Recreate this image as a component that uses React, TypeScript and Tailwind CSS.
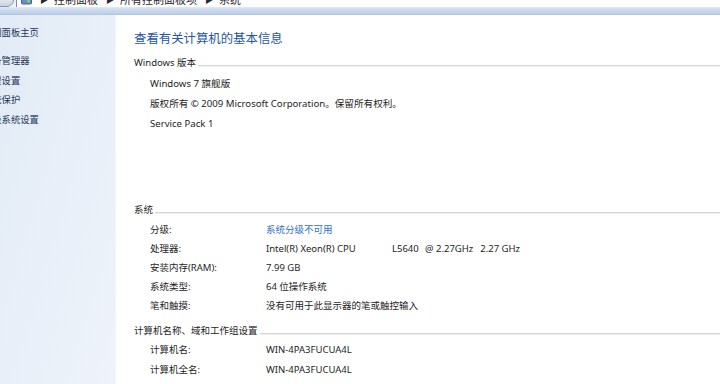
const FONT = { fontFamily: '"Noto Sans", "Noto Sans CJK SC", sans-serif' }

const sidebarLinks = [
  { label: '控制面板主页', gap: 'mt-[11px]' },
  { label: '设备管理器', gap: 'mt-[14px]' },
  { label: '远程设置', gap: 'mt-[6px]' },
  { label: '系统保护', gap: 'mt-[5px]' },
  { label: '高级系统设置', gap: 'mt-[6px]' },
]

const systemRows = [
  { label: '安装内存(RAM):', value: '7.99 GB' },
  { label: '系统类型:', value: '64 位操作系统' },
  { label: '笔和触摸:', value: '没有可用于此显示器的笔或触控输入' },
]

const nameRows = [
  { label: '计算机名:', value: 'WIN-4PA3FUCUA4L' },
  { label: '计算机全名:', value: 'WIN-4PA3FUCUA4L' },
]

function SectionHeading({ title, className = '' }: { title: string; className?: string }) {
  return (
    <div className={`flex h-[14px] items-center ${className}`}>
      <span className="whitespace-nowrap text-[9.5px] text-[#1e1e1e]">{title}</span>
      <div className="ml-[2px] mt-[5px] h-[2px] flex-1 border-t border-[#d4d4d4] bg-[#f1f1f1]" />
    </div>
  )
}

function Row({ label, tall = false, children }: { label: string; tall?: boolean; children: React.ReactNode }) {
  return (
    <div
      className={`flex items-center pl-[16px] text-[9.5px] text-[#1e1e1e] ${tall ? 'h-[20px]' : 'h-[19px]'}`}
    >
      <span className="w-[116px] shrink-0 whitespace-nowrap">{label}</span>
      <span className="whitespace-nowrap">{children}</span>
    </div>
  )
}

function AddressBar() {
  return (
    <div className="h-[7px] overflow-hidden bg-gradient-to-b from-[#e4ecf7] to-[#f4f8fc]">
      <div className="-mt-[7px] flex h-[14px] items-center text-[11px] text-[#2a2a2a]">
        <div className="-ml-[10px] h-[14px] w-[24px] shrink-0 rounded-full border border-[#8b98ab] bg-gradient-to-b from-[#f6f8fb] to-[#c9d3e1]" />
        <div className="ml-[2px] flex h-[14px] flex-1 items-center border-l border-[#7d8aa0] bg-white pl-[4px]">
          <svg width="11" height="11" viewBox="0 0 11 11" className="shrink-0">
            <rect x="0.5" y="1" width="10" height="8" rx="1" fill="#6d8cc7" stroke="#42619a" />
            <rect x="2" y="2.5" width="3" height="2" fill="#d7e3f5" />
            <rect x="6" y="5" width="3" height="2.5" fill="#9fc06a" />
          </svg>
          <span className="ml-[8px] text-[8px]">▶</span>
          <span className="ml-[6px]">控制面板</span>
          <span className="ml-[8px] text-[8px]">▶</span>
          <span className="ml-[6px]">所有控制面板项</span>
          <span className="ml-[8px] text-[8px]">▶</span>
          <span className="ml-[6px]">系统</span>
        </div>
      </div>
    </div>
  )
}

export default function App() {
  return (
    <div className="flex h-[384px] w-[720px] flex-col overflow-hidden bg-white" style={FONT}>
      <AddressBar />
      <div className="h-[8px] border-b border-[#b3c6e1] bg-gradient-to-b from-[#dfe8f5] via-[#c9d8ed] to-[#bccfe8]" />

      <div className="flex flex-1">
        <aside className="w-[116px] shrink-0 overflow-hidden border-r border-[#f3f7fc] bg-gradient-to-br from-[#e2ebf6] via-[#e8eff8] to-[#eef3fa]">
          <div className="-ml-[17px] flex flex-col text-[9.3px] leading-[14px] text-[#243757]">
            {sidebarLinks.map((link) => (
              <span key={link.label} className={`whitespace-nowrap ${link.gap}`}>
                {link.label}
              </span>
            ))}
          </div>
        </aside>

        <main className="flex-1 pl-[18px]">
          <h1 className="mt-[16px] h-[16px] text-[12.4px] leading-[16px] font-normal whitespace-nowrap text-[#2457a4]">
            查看有关计算机的基本信息
          </h1>

          <SectionHeading title="Windows 版本" className="mt-[9px]" />
          <div className="mt-[4px] pl-[16px] text-[9.6px] leading-[20px] text-[#1e1e1e]">
            <p>Windows 7 旗舰版</p>
            <p>版权所有 © 2009 Microsoft Corporation。保留所有权利。</p>
            <p>Service Pack 1</p>
          </div>

          <SectionHeading title="系统" className="mt-[69px]" />
          <div className="mt-[4px]">
            <Row label="分级:">
              <span className="text-[#2f6fc6]">系统分级不可用</span>
            </Row>
            <Row label="处理器:">
              <span className="inline-block w-[126px]">Intel(R) Xeon(R) CPU</span>
              <span className="inline-block w-[33px]">L5640</span>
              <span>@ 2.27GHz</span>
              <span className="ml-[7px]">2.27 GHz</span>
            </Row>
            {systemRows.map((row) => (
              <Row key={row.label} label={row.label}>
                {row.value}
              </Row>
            ))}
          </div>

          <SectionHeading title="计算机名称、域和工作组设置" className="mt-[8px]" />
          <div className="mt-[2px]">
            {nameRows.map((row) => (
              <Row key={row.label} label={row.label} tall>
                {row.value}
              </Row>
            ))}
          </div>
        </main>
      </div>
    </div>
  )
}
